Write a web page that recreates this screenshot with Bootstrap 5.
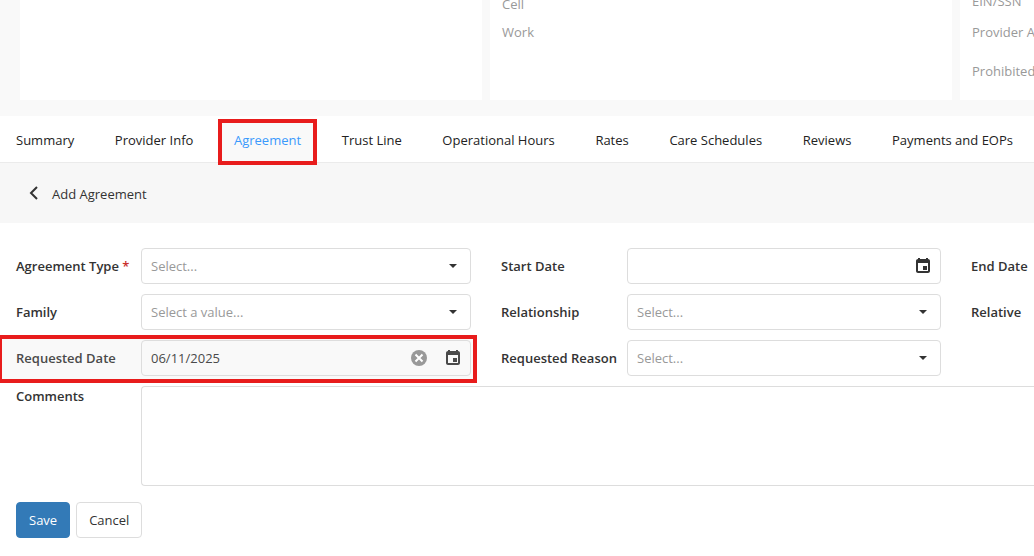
<!DOCTYPE html>
<html lang="en">
<head>
<meta charset="utf-8">
<meta name="viewport" content="width=device-width, initial-scale=1">
<title>Add Agreement</title>
<link href="https://cdn.jsdelivr.net/npm/bootstrap@5.3.0/dist/css/bootstrap.min.css" rel="stylesheet">
<style>
  body { font-family: "Open Sans", "Noto Sans", sans-serif; font-size: 13px; line-height: 20px; color: #333; background: #fff; overflow-x: hidden; }

  /* provider detail cards */
  .detail-strip { display: grid; grid-template-columns: minmax(0, 1fr) minmax(0, 1fr) 74px; gap: 8px; padding: 0 0 16px 20px; background: #f9f9f9; }
  .detail-card { height: 100px; background: #fff; padding: 0 0 0 12px; color: #999; line-height: 28px; }
  .detail-card.phones { padding-bottom: 54px; }
  .detail-card.ids { padding-bottom: 15px; }
  .ids .spaced { margin: 3px 0 11px; }

  /* tabs */
  .tab-bar { gap: 24px; padding: 0 21px 0 16px; border-bottom: 1px solid #ebebeb; }
  .tab-bar .nav-link { padding: 14px 0 12px; color: #222; line-height: 20px; }
  .tab-bar .nav-link.active { color: #3b99fc; position: relative; isolation: isolate; box-shadow: inset 0 -1px #337ab7; }
  .tab-bar .nav-link.active::before { content: ""; position: absolute; inset: 3px -16px -3px; border: 4px solid #e81c1c; background: #f9f9f9; z-index: -1; }

  .page-head { height: 60px; background: #f7f7f7; padding: 2px 24px 0; gap: 8px; }
  .icon-btn { border: 0; background: none; padding: 0; line-height: 0; color: #333; }

  /* form */
  .agreement-form { padding: 25px 0 18px 16px; }
  .field-grid { display: grid; grid-template-columns: minmax(0, 455fr) minmax(0, 440fr) 63px; gap: 10px 30px; }
  .field-row { display: flex; align-items: center; min-width: 0; }
  .field-row > label { flex: 0 0 125px; font-weight: 600; white-space: nowrap; }
  .field-grid > :nth-child(3n+2) > label { flex-basis: 126px; }
  .field-grid > :nth-child(3n) > label { flex: 1 1 0; min-width: 0; }
  .req { color: #c9302c; }
  .field-box { flex: 1; min-width: 0; height: 36px; display: flex; align-items: center; gap: 15px; position: relative; border: 1px solid #ddd; border-radius: 4px; padding-right: 8px; }
  .field-box input, .field-box select { flex: 1; min-width: 0; height: 34px; border: 0; background: none; padding: 0 9px; appearance: none; color: #333; outline: 0; }
  .field-box select { color: #999; margin-right: -8px; }
  .field-box .caret { position: absolute; right: 13px; top: 15px; pointer-events: none; }
  .marked { position: relative; isolation: isolate; }
  .marked::before { content: ""; position: absolute; inset: -5px -6px -7px -18px; border: 4px solid #e81c1c; background: #f9f9f9; z-index: -1; }
  .marked, .marked input, .marked .icon-btn { color: #4a4a4a; }
  .marked .icon-btn.clear { color: #999; }
  .comment-row { margin-top: 10px; align-items: flex-start; }
  .comment-row textarea { flex: 1; min-width: 0; height: 100px; border: 1px solid #ddd; border-right: 0; border-radius: 4px 0 0 4px; padding: 8px 9px; resize: none; display: block; }
  .form-actions { margin-top: 16px; gap: 6px; }
  .form-actions .btn { font-size: 13px; line-height: 20px; padding: 7px 12px; border-radius: 4px; }
  .btn-save { background: #337ab7; border-color: #337ab7; color: #fff; }
  .btn-cancel { background: #fff; border-color: #ddd; color: #333; }
</style>
</head>
<body>
<svg class="d-none" aria-hidden="true">
  <symbol id="calendar" viewBox="0 0 18 18"><path fill="currentColor" fill-rule="evenodd" d="M4 1h2v1h6V1h2v1c1.100 0 2 .9 2 2v10c0 1.100-.9 2-2 2H4c-1.100 0-2-.9-2-2V4c0-1.100.9-2 2-2zM4 6v8h10V6zM9 9h4v4H9z"/></symbol>
  <symbol id="clear" viewBox="0 0 20 20"><circle cx="10" cy="10" r="8" fill="currentColor"/><path d="M6.500 6.500l7 7M13.500 6.500l-7 7" stroke="#fff" stroke-width="2"/></symbol>
  <symbol id="caret" viewBox="0 0 8 4"><path fill="currentColor" d="M0 0h8L4 4z"/></symbol>
</svg>

<header class="detail-strip">
  <div class="detail-card"></div>
  <div class="detail-card phones d-flex flex-column justify-content-end overflow-hidden">
    <div>Cell</div>
    <div>Work</div>
  </div>
  <div class="detail-card ids d-flex flex-column justify-content-end overflow-hidden text-nowrap">
    <div>EIN/SSN</div>
    <div class="spaced">Provider A</div>
    <div>Prohibited</div>
  </div>
</header>

<nav class="nav tab-bar flex-nowrap text-nowrap justify-content-between">
  <a class="nav-link" href="#">Summary</a>
  <a class="nav-link" href="#">Provider Info</a>
  <a class="nav-link active" aria-current="page" href="#">Agreement</a>
  <a class="nav-link" href="#">Trust Line</a>
  <a class="nav-link" href="#">Operational Hours</a>
  <a class="nav-link" href="#">Rates</a>
  <a class="nav-link" href="#">Care Schedules</a>
  <a class="nav-link" href="#">Reviews</a>
  <a class="nav-link" href="#">Payments and EOPs</a>
</nav>

<div class="page-head d-flex align-items-center">
  <button type="button" class="icon-btn" aria-label="Back">
    <svg width="20" height="20" viewBox="0 0 20 20" fill="none" stroke="currentColor" stroke-width="2"><path d="M13 3L7 9l6 6"/></svg>
  </button>
  <span>Add Agreement</span>
</div>

<form class="agreement-form">
  <div class="field-grid">
    <div class="field-row">
      <label for="type">Agreement Type <span class="req">*</span></label>
      <div class="field-box"><select id="type"><option>Select...</option></select><svg class="caret" width="8" height="4"><use href="#caret"/></svg></div>
    </div>
    <div class="field-row">
      <label for="start">Start Date</label>
      <div class="field-box"><input id="start" type="text"><button type="button" class="icon-btn" aria-label="Choose start date"><svg width="18" height="18"><use href="#calendar"/></svg></button></div>
    </div>
    <div class="field-row"><label>End Date</label></div>

    <div class="field-row">
      <label for="family">Family</label>
      <div class="field-box"><select id="family"><option>Select a value...</option></select><svg class="caret" width="8" height="4"><use href="#caret"/></svg></div>
    </div>
    <div class="field-row">
      <label for="relationship">Relationship</label>
      <div class="field-box"><select id="relationship"><option>Select...</option></select><svg class="caret" width="8" height="4"><use href="#caret"/></svg></div>
    </div>
    <div class="field-row"><label>Relative</label></div>

    <div class="field-row marked">
      <label for="requested">Requested Date</label>
      <div class="field-box"><input id="requested" type="text" value="06/11/2025"><button type="button" class="icon-btn clear" aria-label="Clear date"><svg width="20" height="20"><use href="#clear"/></svg></button><button type="button" class="icon-btn" aria-label="Choose requested date"><svg width="18" height="18"><use href="#calendar"/></svg></button></div>
    </div>
    <div class="field-row">
      <label for="reason">Requested Reason</label>
      <div class="field-box"><select id="reason"><option>Select...</option></select><svg class="caret" width="8" height="4"><use href="#caret"/></svg></div>
    </div>
  </div>

  <div class="field-row comment-row">
    <label for="comments">Comments</label>
    <textarea id="comments"></textarea>
  </div>

  <div class="form-actions d-flex">
    <button type="submit" class="btn btn-save">Save</button>
    <button type="button" class="btn btn-cancel">Cancel</button>
  </div>
</form>
<script src="https://cdn.jsdelivr.net/npm/bootstrap@5.3.0/dist/js/bootstrap.bundle.min.js"></script>
</body>
</html>
